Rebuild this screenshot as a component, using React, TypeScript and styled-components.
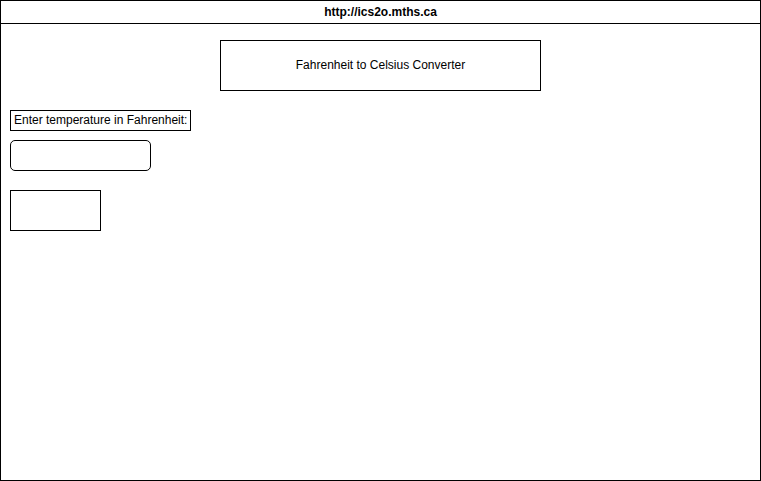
import React from "react";
import styled, { createGlobalStyle } from "styled-components";

const GlobalStyle = createGlobalStyle`
  *, *::before, *::after { box-sizing: border-box; }
  body {
    margin: 0;
    background: #fff;
    color: #000;
    font: 12px/14px "Liberation Sans", Arial, sans-serif;
  }
`;

const BrowserWindow = styled.div`
  display: flex;
  flex-direction: column;
  min-height: 100vh;
  border: 1px solid #000;
`;

const AddressBar = styled.header`
  padding: 4px 8px;
  border-bottom: 1px solid #000;
  text-align: center;
  font-weight: 700;
`;

const Page = styled.main`
  display: flex;
  flex-direction: column;
  flex: 1;
  padding: 16px 9px;
`;

const Title = styled.h1`
  align-self: center;
  width: 100%;
  max-width: 321px;
  margin: 0;
  padding: 17px 16px 18px;
  border: 1px solid #000;
  text-align: center;
  font-size: 12px;
  line-height: 14px;
  font-weight: 400;
`;

const ConverterForm = styled.form`
  display: flex;
  flex-direction: column;
  align-items: flex-start;
  margin-top: 19px;
`;

const FieldLabel = styled.label`
  padding: 2px 3px 3px;
  border: 1px solid #000;
`;

const TemperatureInput = styled.input`
  width: 141px;
  height: 31px;
  margin: 9px 0 19px;
  padding: 0 8px;
  border: 1px solid #000;
  border-radius: 5px;
  background: #fff;
  font: inherit;
`;

const ConvertButton = styled.button`
  width: 91px;
  height: 41px;
  padding: 0;
  border: 1px solid #000;
  border-radius: 0;
  background: #fff;
  font: inherit;
`;

export default function App() {
  return (
    <>
      <GlobalStyle />
      <BrowserWindow>
        <AddressBar>http://ics2o.mths.ca</AddressBar>
        <Page>
          <Title>Fahrenheit to Celsius Converter</Title>
          <ConverterForm onSubmit={(event) => event.preventDefault()}>
            <FieldLabel htmlFor="fahrenheit">Enter temperature in Fahrenheit:</FieldLabel>
            <TemperatureInput id="fahrenheit" type="text" inputMode="decimal" />
            <ConvertButton type="submit" aria-label="Convert" />
          </ConverterForm>
        </Page>
      </BrowserWindow>
    </>
  );
}
